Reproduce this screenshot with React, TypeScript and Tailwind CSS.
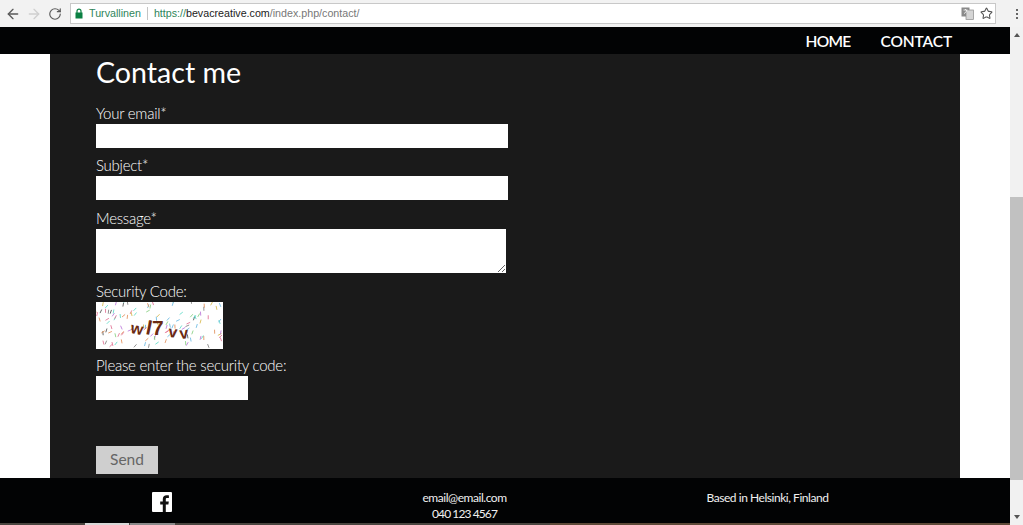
import { ArrowLeft, ArrowRight, RotateCw, Star } from 'lucide-react'

// small seeded generator so the captcha noise stays the same between runs
function noise(count: number) {
  const colors = ['#e0688c', '#5fb4e0', '#7fcc78', '#d4b440', '#444444', '#b86fd8', '#55d8c4', '#e08850', '#777777']
  const out = []
  let seed = 17
  const next = () => {
    seed = (seed * 16807) % 2147483647
    return seed / 2147483647
  }
  for (let i = 0; i < count; i++) {
    const x = next() * 126
    const y = next() * 46
    const a = 0.4 + next() * 1.6
    out.push({ x, y, dx: Math.cos(a) * 4, dy: -Math.sin(a) * 4, c: colors[Math.floor(next() * colors.length)] })
  }
  return out
}

function Captcha() {
  return (
    <svg width="127" height="47" viewBox="0 0 127 47" className="block bg-white">
      {noise(115).map((d, i) => (
        <line key={i} x1={d.x} y1={d.y} x2={d.x + d.dx} y2={d.y + d.dy} stroke={d.c} strokeWidth="1" strokeOpacity="0.8" />
      ))}
      <g fill="#6b2a12" fontFamily="'Liberation Sans', sans-serif" fontWeight="700" fontSize="16">
        <text x="34" y="31" transform="rotate(10 34 31)">w</text>
        <text x="49" y="32" transform="rotate(12 49 32)" fontSize="20">l</text>
        <text x="56" y="33" fontSize="21">7</text>
        <text x="72" y="35" transform="rotate(6 72 35)">v</text>
        <text x="84" y="37" transform="rotate(-6 84 37)">v</text>
      </g>
    </svg>
  )
}

function Label({ children }: { children: React.ReactNode }) {
  return <label className="block text-[15px] leading-[20px] font-light tracking-[-0.25px] text-white">{children}</label>
}

function Toolbar() {
  return (
    <div className="flex h-[27px] shrink-0 items-center bg-[#f2f2f2]">
      <div className="flex w-[70px] items-center gap-[5px] pl-[5px]">
        <ArrowLeft size={16} className="text-[#5a5a5a]" />
        <ArrowRight size={16} className="text-[#cfcfcf]" />
        <RotateCw size={14} className="ml-[1px] text-[#5a5a5a]" />
      </div>
      <div className="flex h-[21px] w-[926px] items-center border border-[#c8c8c8] bg-white font-['Liberation_Sans',sans-serif] text-[10.7px]">
        <svg width="10" height="11" viewBox="0 0 10 11" className="ml-[3px]">
          <rect x="1.5" y="4.5" width="7" height="6" fill="#0b8043" />
          <path d="M3 5V3.2a2 2 0 0 1 4 0V5" fill="none" stroke="#0b8043" strokeWidth="1.2" />
        </svg>
        <span className="ml-[5px] text-[#2f855a]">Turvallinen</span>
        <span className="mx-[6px] h-[13px] w-px bg-[#c4c4c4]" />
        <span className="text-[#2f855a]">https://</span>
        <span className="text-[#222222]">bevacreative.com</span>
        <span className="text-[#777777]">/index.php/contact/</span>
        <div className="ml-auto flex items-center gap-[6px] pr-[2px]">
          <svg width="13" height="13" viewBox="0 0 13 13">
            <rect x="0.5" y="0.5" width="8" height="9" fill="#8a8a8a" />
            <rect x="5" y="3" width="7.5" height="9.5" fill="#d5d5d5" stroke="#8a8a8a" strokeWidth="0.7" />
            <path d="M2.5 3h4M4.5 2v1M3 6.5c1.5-.6 2.4-1.8 2.7-3.5" stroke="#ffffff" strokeWidth="0.8" fill="none" />
          </svg>
          <Star size={13} className="text-[#555555]" />
        </div>
      </div>
      <div className="flex flex-1 flex-col items-center gap-[2px] pl-[14px]">
        <span className="h-[2px] w-[2px] bg-[#666666]" />
        <span className="h-[2px] w-[2px] bg-[#666666]" />
        <span className="h-[2px] w-[2px] bg-[#666666]" />
      </div>
    </div>
  )
}

function Scrollbar() {
  return (
    <div className="flex w-[13px] shrink-0 flex-col bg-[#f1f1f1]">
      <div className="flex h-[16px] items-center justify-center">
        <span className="h-0 w-0 border-x-[3px] border-b-[4px] border-x-transparent border-b-[#555555]" />
      </div>
      <div className="mt-[154px] h-[283px] bg-[#c1c1c1]" />
      <div className="mt-auto flex h-[16px] items-center justify-center">
        <span className="h-0 w-0 border-x-[3px] border-t-[4px] border-x-transparent border-t-[#555555]" />
      </div>
    </div>
  )
}

export default function App() {
  return (
    <div className="flex h-[525px] w-[1023px] flex-col overflow-hidden bg-white font-['Lato',sans-serif]">
      <Toolbar />
      <div className="flex min-h-0 flex-1">
        <div className="flex min-w-0 flex-1 flex-col">
          <nav className="flex h-[27px] shrink-0 items-center justify-end gap-[30px] bg-[#020304] pt-[2px] pr-[58px] text-[15.5px] font-semibold text-white">
            <a className="tracking-[-0.7px]">HOME</a>
            <a className="tracking-[-0.15px]">CONTACT</a>
          </nav>
          <main className="mx-[50px] min-h-0 flex-1 bg-[#1a1a1a] pl-[46px] text-[#f0f0f0]">
            <h1 className="text-[28.6px] leading-[36px] font-normal text-white">Contact me</h1>
            <div className="mt-[13px]">
              <Label>Your email*</Label>
              <input className="mt-[1px] block h-[24px] w-[412px] bg-white" />
            </div>
            <div className="mt-[7px]">
              <Label>Subject*</Label>
              <input className="mt-[1px] block h-[24px] w-[412px] bg-white" />
            </div>
            <div className="mt-[8px]">
              <Label>Message*</Label>
              <textarea className="mt-[1px] block h-[44px] w-[410px] bg-white" />
            </div>
            <div className="mt-[8px]">
              <Label>Security Code:</Label>
              <div className="mt-[1px]">
                <Captcha />
              </div>
            </div>
            <div className="mt-[6px]">
              <Label>Please enter the security code:</Label>
              <input className="mt-[1px] block h-[24px] w-[152px] bg-white" />
            </div>
            <button className="mt-[46px] block h-[28px] w-[62px] bg-[#cfcfcf] text-[15.5px] text-[#666666]">Send</button>
          </main>
          <footer className="grid h-[45px] shrink-0 grid-cols-[303px_303px_303px] bg-[#020304] pl-[10px] text-center text-[12px] leading-[16px] text-[#f0f0f0]">
            <div className="flex justify-center pt-[14px]">
              <svg width="20" height="20" viewBox="0 0 20 20">
                <rect width="20" height="20" rx="1" fill="#ffffff" />
                <path d="M13.8 20v-7.6h2.6l.4-3h-3V7.5c0-.9.3-1.4 1.5-1.4h1.6V3.4c-.3 0-1.2-.1-2.3-.1-2.3 0-3.8 1.4-3.8 3.9v2.2H8.2v3h2.6V20z" fill="#111111" />
              </svg>
            </div>
            <div className="pt-[12px]">
              <p className="tracking-[-0.45px]">email@email.com</p>
              <p className="tracking-[-0.9px]">040 123 4567</p>
            </div>
            <div className="pt-[12px]">
              <p className="tracking-[-0.46px]">Based in Helsinki, Finland</p>
            </div>
          </footer>
          <div className="flex h-[2px] shrink-0 bg-[#4a4640]">
            <span className="ml-[85px] w-[44px] bg-[#d8d8d8]" />
            <span className="ml-[1px] w-[45px] bg-[#8a8a8a]" />
            <span className="ml-auto w-[460px] bg-[#5e4a38]" />
          </div>
        </div>
        <Scrollbar />
      </div>
    </div>
  )
}
